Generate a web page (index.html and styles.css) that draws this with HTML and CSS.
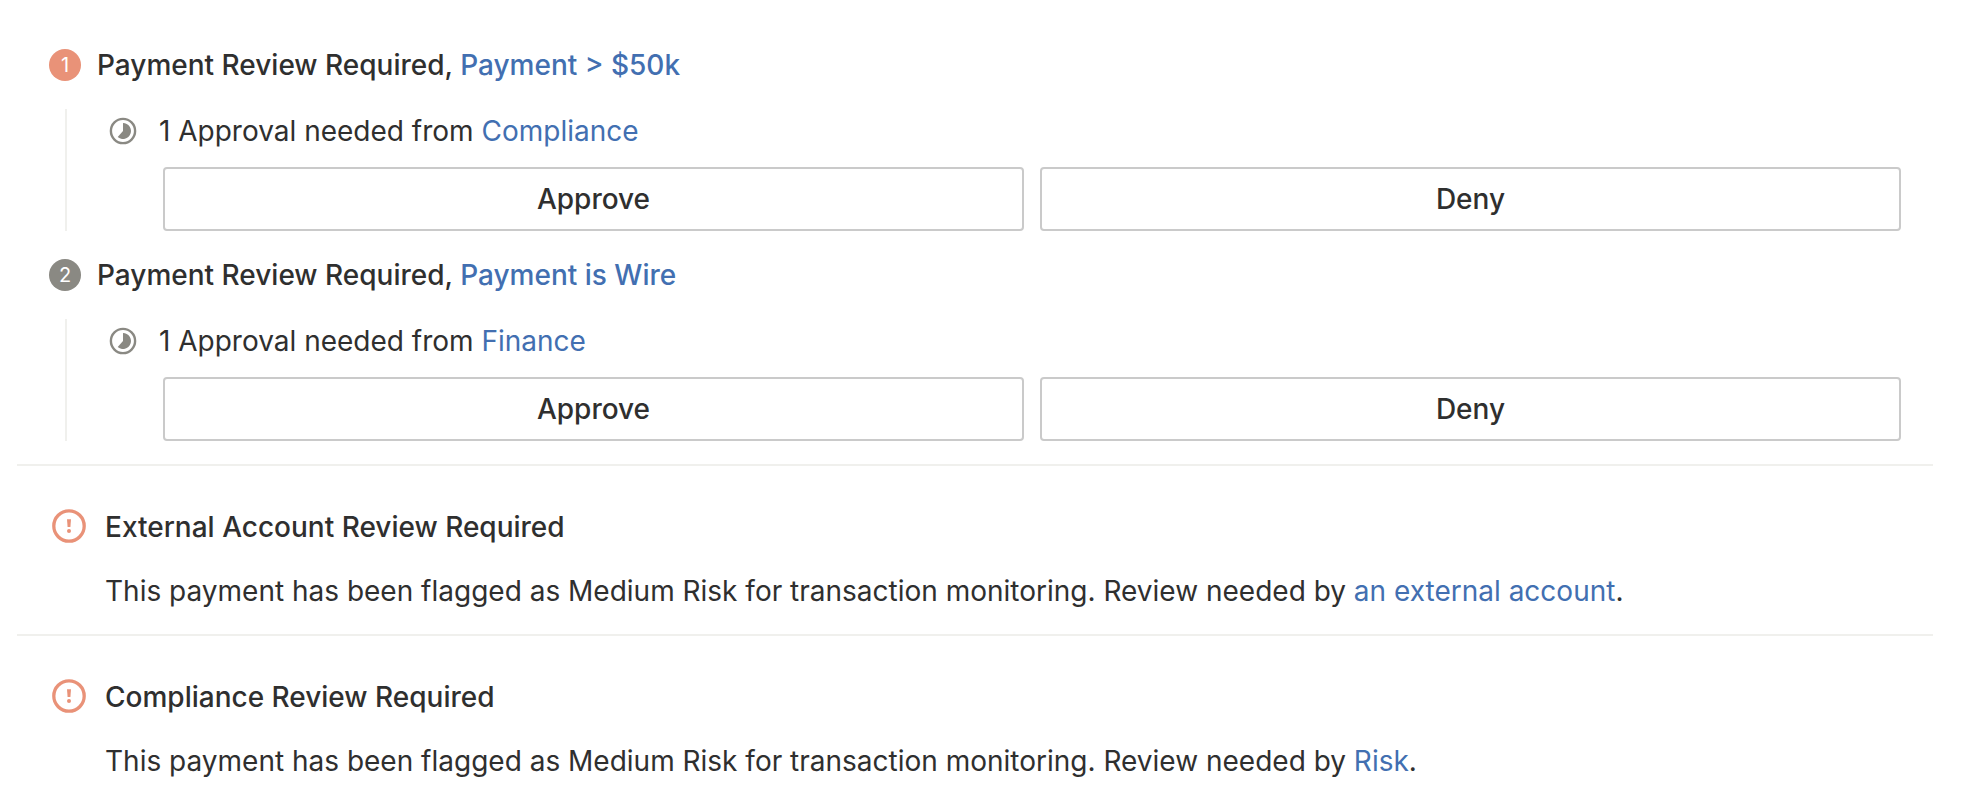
FILE: index.html
```html
<!DOCTYPE html>
<html lang="en">
<head>
<meta charset="utf-8">
<title>Payment reviews</title>
<link rel="stylesheet" href="styles.css">
</head>
<body>
<main class="reviews">
  <section class="rules">
    <article class="rule">
      <h2 class="rule-title"><span class="step step-active">1</span><span>Payment Review Required, <a href="#">Payment &gt; $50k</a></span></h2>
      <div class="rule-body">
        <p class="approval">
          <svg class="progress" viewBox="0 0 28 28" aria-hidden="true"><circle cx="14" cy="14" r="12.1" fill="none" stroke="currentColor" stroke-width="2.4"/><path d="M14 6a8 8 0 1 1-5.3 14L14 14z" fill="currentColor"/></svg>
          <span>1 Approval needed from <a href="#">Compliance</a></span>
        </p>
        <div class="actions"><button type="button">Approve</button><button type="button">Deny</button></div>
      </div>
    </article>
    <article class="rule">
      <h2 class="rule-title"><span class="step">2</span><span>Payment Review Required, <a href="#">Payment is Wire</a></span></h2>
      <div class="rule-body">
        <p class="approval">
          <svg class="progress" viewBox="0 0 28 28" aria-hidden="true"><circle cx="14" cy="14" r="12.1" fill="none" stroke="currentColor" stroke-width="2.4"/><path d="M14 6a8 8 0 1 1-5.3 14L14 14z" fill="currentColor"/></svg>
          <span>1 Approval needed from <a href="#">Finance</a></span>
        </p>
        <div class="actions"><button type="button">Approve</button><button type="button">Deny</button></div>
      </div>
    </article>
  </section>
  <section class="notice">
    <svg class="alert" viewBox="0 0 34 34" aria-hidden="true"><circle cx="17" cy="17" r="15.2" fill="none" stroke="currentColor" stroke-width="3.300"/><path d="M15 10.300h4l-.6 7.700h-2.800z" fill="currentColor"/><circle cx="17" cy="22" r="2" fill="currentColor"/></svg>
    <div class="notice-text">
      <h2>External Account Review Required</h2>
      <p>This payment has been flagged as Medium Risk for transaction monitoring. Review needed by <a href="#">an external account</a>.</p>
    </div>
  </section>
  <section class="notice">
    <svg class="alert" viewBox="0 0 34 34" aria-hidden="true"><circle cx="17" cy="17" r="15.2" fill="none" stroke="currentColor" stroke-width="3.300"/><path d="M15 10.300h4l-.6 7.700h-2.800z" fill="currentColor"/><circle cx="17" cy="22" r="2" fill="currentColor"/></svg>
    <div class="notice-text">
      <h2>Compliance Review Required</h2>
      <p>This payment has been flagged as Medium Risk for transaction monitoring. Review needed by <a href="#">Risk</a>.</p>
    </div>
  </section>
</main>
</body>
</html>
```
FILE: styles.css
```css
* { box-sizing: border-box; }
body { margin: 0; background: #fff; color: #2f2f2f; font: 400 28px/40px Inter, sans-serif; }
h2, p { margin: 0; font-size: 28px; line-height: 40px; }
h2 { font-weight: 500; }
a { color: #426fb1; text-decoration: none; }
.reviews { padding: 45px 29px 0 17px; }
.rules { padding: 0 32px 23px; }
.rule + .rule { margin-top: 24px; }
.rule-title { display: flex; align-items: center; gap: 16px; }
.step { width: 32px; height: 32px; border-radius: 50%; background: #8a8983; color: #fff; font-size: 20px; font-weight: 400; line-height: 32px; text-align: center; }
.step-active { background: #e99278; }
.rule-body { margin: 24px 0 0 16px; padding-left: 42px; border-left: 2px solid #f0f0ed; }
.approval { display: flex; align-items: center; gap: 22px; padding-top: 2px; }
.progress { width: 28px; height: 28px; color: #8a8983; }
.actions { display: grid; grid-template-columns: 1fr 1fr; gap: 16px; margin: 16px 0 0 54px; }
button { height: 64px; padding: 0; border: 2px solid #cacaca; border-radius: 4px; background: #fff; color: #2f2f2f; font: 500 28px/40px Inter, sans-serif; }
.notice { display: flex; gap: 19px; padding: 41px 34px 23px 35px; border-top: 2px solid #f0f0ed; }
.alert { flex: none; width: 34px; height: 34px; margin-top: 2px; color: #e99278; }
.notice-text p { margin-top: 24px; }
```
